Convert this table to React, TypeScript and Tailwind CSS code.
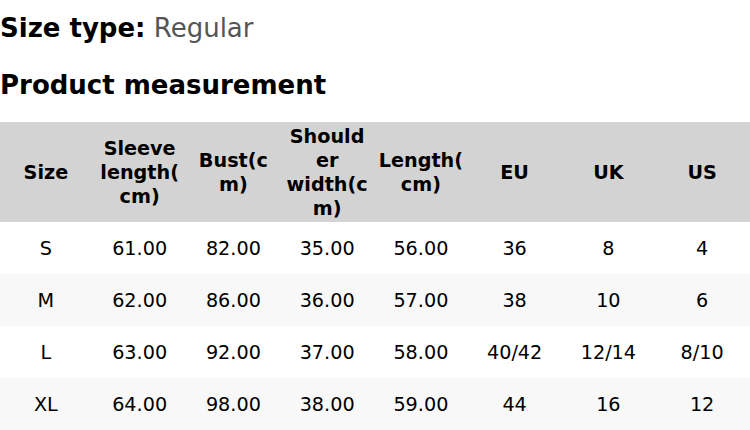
import React from "react";

const headers = [
  "Size",
  "Sleeve length(cm)",
  "Bust(cm)",
  "Shoulder width(cm)",
  "Length(cm)",
  "EU",
  "UK",
  "US",
];

const rows = [
  ["S", "61.00", "82.00", "35.00", "56.00", "36", "8", "4"],
  ["M", "62.00", "86.00", "36.00", "57.00", "38", "10", "6"],
  ["L", "63.00", "92.00", "37.00", "58.00", "40/42", "12/14", "8/10"],
  ["XL", "64.00", "98.00", "38.00", "59.00", "44", "16", "12"],
];

export default function App() {
  return (
    <div
      className="w-[750px] h-[430px] overflow-hidden bg-white text-black"
      style={{ fontFamily: '"DejaVu Sans", sans-serif' }}
    >
      <div className="pt-[13px] text-[26px] leading-[30px]">
        <span className="font-bold">Size type:</span>{" "}
        <span className="text-[#555555]">Regular</span>
      </div>
      <div className="mt-[27px] text-[26px] leading-[30px] font-bold">
        Product measurement
      </div>
      <div className="mt-[22px] w-[750px]">
        <div className="grid grid-cols-8 h-[100px] bg-[#d3d3d3]">
          {headers.map((h) => (
            <div
              key={h}
              className="flex min-w-0 items-center justify-center pl-[3px] pr-[5px] pt-[2px]"
            >
              <span className="block w-full min-w-0 text-center text-[19.2px] leading-[24px] font-bold [overflow-wrap:anywhere]">
                {h}
              </span>
            </div>
          ))}
        </div>
        {rows.map((r, i) => (
          <div
            key={i}
            className={`grid grid-cols-8 h-[52px] ${i % 2 === 1 ? "bg-[#f8f8f8]" : "bg-white"}`}
          >
            {r.map((c, j) => (
              <div
                key={j}
                className="flex min-w-0 items-center justify-center pl-[3px] pr-[5px] pt-[2px] text-center text-[19.2px] leading-[24px]"
              >
                {c}
              </div>
            ))}
          </div>
        ))}
      </div>
    </div>
  );
}
